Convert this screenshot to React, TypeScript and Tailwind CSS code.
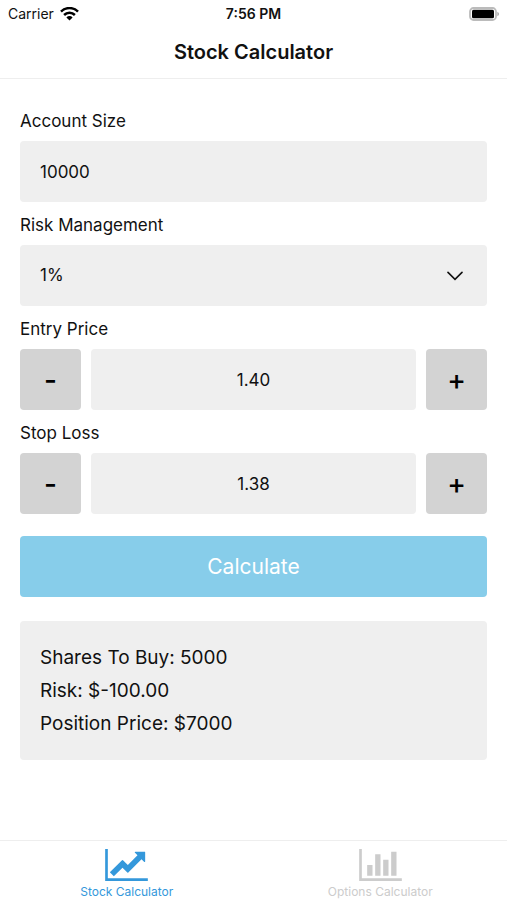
import { useState } from "react"

const fieldStyle = "h-[61px] w-full min-w-0 rounded bg-[#efefef] text-[17px] text-[#111] outline-none"
const labelStyle = "mb-2.5 block text-[17px] leading-5"

function StatusBar() {
    return (
        <div className="grid h-7 grid-cols-3 items-center px-2 text-sm text-[#111]">
            <div className="flex items-center gap-1.5">
                <span>Carrier</span>
                <svg width="19" height="14" viewBox="0 0 19 14" aria-hidden="true">
                    <g fill="none" stroke="#000" strokeWidth="2.5">
                        <path d="M1 4.6a12 12 0 0 1 17 0" />
                        <path d="M4.1 8a7.6 7.6 0 0 1 10.8 0" />
                    </g>
                    <path d="M6.4 10.4a4.4 4.4 0 0 1 6.2 0L9.5 13.5z" fill="#000" />
                </svg>
            </div>
            <span className="text-center font-semibold">7:56 PM</span>
            <svg className="justify-self-end" width="31" height="15" viewBox="0 0 31 15" aria-hidden="true">
                <rect x="2" y="1" width="26" height="12" rx="3.5" fill="#fff" stroke="#bbb" strokeWidth="1.8" />
                <rect x="4" y="2.8" width="22" height="8.4" rx="1.5" fill="#000" />
                <path d="M29.4 4.8q1.6.7 1.6 2.2t-1.6 2.2z" fill="#a5a5a5" />
            </svg>
        </div>
    )
}

type StepperProps = {
    id: string
    label: string
    value: string
    onChange: (value: string) => void
}

function Stepper({ id, label, value, onChange }: StepperProps) {
    const step = (amount: number) => onChange((Number(value) + amount).toFixed(2))
    const buttonStyle = "size-[61px] shrink-0 rounded bg-[#d3d3d3] text-[28px] font-medium text-black"

    return (
        <div>
            <label htmlFor={id} className={labelStyle}>{label}</label>
            <div className="flex gap-2.5">
                <button type="button" aria-label={`Decrease ${label}`} onClick={() => step(-0.01)} className={buttonStyle}>-</button>
                <input id={id} value={value} onChange={(e) => onChange(e.target.value)} className={`${fieldStyle} text-center`} type="text" inputMode="decimal" />
                <button type="button" aria-label={`Increase ${label}`} onClick={() => step(0.01)} className={buttonStyle}>+</button>
            </div>
        </div>
    )
}

function App() {
    const [account, setAccount] = useState('10000')
    const [percent, setPercent] = useState('1')
    const [entry, setEntry] = useState('1.40')
    const [stop, setStop] = useState('1.38')
    const [result, setResult] = useState({ shares: 5000, risk: '-100.00', price: 7000 })

    function calculate() {
        const risk = Number(account) * Number(percent) / 100
        const distance = Math.abs(Number(entry) - Number(stop))
        if (!distance) {
            return
        }
        const shares = Math.round(risk / distance)
        setResult({ shares, risk: (-risk).toFixed(2), price: Math.round(shares * Number(entry)) })
    }

    return (
        <div className="flex min-h-screen flex-col bg-white font-['Inter',sans-serif] text-[#111]">
            <header className="border-b border-[#eee]">
                <StatusBar />
                <h1 className="pt-2.5 pb-3 text-center text-xl leading-7 font-semibold">Stock Calculator</h1>
            </header>

            <main className="flex-1 px-5 pt-8">
                <div className="flex flex-col gap-[13px]">
                    <div>
                        <label htmlFor="account" className={labelStyle}>Account Size</label>
                        <input id="account" value={account} onChange={(e) => setAccount(e.target.value)} className={`${fieldStyle} block px-5`} type="text" inputMode="numeric" />
                    </div>
                    <div>
                        <label htmlFor="risk" className={labelStyle}>Risk Management</label>
                        <div className="relative">
                            <select id="risk" value={percent} onChange={(e) => setPercent(e.target.value)} className={`${fieldStyle} block appearance-none px-5`}>
                                <option value="1">1%</option>
                                <option value="2">2%</option>
                                <option value="3">3%</option>
                            </select>
                            <svg className="pointer-events-none absolute inset-y-0 right-6 my-auto" width="16" height="10" viewBox="0 0 16 10" aria-hidden="true">
                                <path d="M1 1.4l7 7 7-7" fill="none" stroke="#111" strokeWidth="1.6" strokeLinecap="round" />
                            </svg>
                        </div>
                    </div>
                    <Stepper id="entry" label="Entry Price" value={entry} onChange={setEntry} />
                    <Stepper id="stop" label="Stop Loss" value={stop} onChange={setStop} />
                </div>

                <button type="button" onClick={calculate} className="mt-[22px] block h-[61px] w-full rounded bg-[#87cdea] text-[21px] text-white">
                    Calculate
                </button>

                <div className="mt-6 rounded bg-[#efefef] p-5 text-[19px] leading-[33px]">
                    <p>Shares To Buy: {result.shares}</p>
                    <p>Risk: ${result.risk}</p>
                    <p>Position Price: ${result.price}</p>
                </div>
            </main>

            <nav className="grid h-[60px] grid-cols-2 border-t border-[#eee] text-xs leading-4">
                <a href="#stock" aria-current="page" className="flex flex-col items-center gap-[3px] pt-2 text-[#3498db]">
                    <svg width="43" height="32" viewBox="0 128 2048 1536" fill="currentColor" aria-hidden="true">
                        <path d="M2048 1536v128H0V128h128v1408h1920zM1920 288v435q0 21-19.5 29.5T1865 745l-121-121-633 633q-10 10-23 10t-23-10L832 1024l-416 416-192-192 585-585q10-10 23-10t23 10l233 233 464-464-121-121q-16-16-7.5-35.5T1453 256h435q14 0 23 9t9 23z" />
                    </svg>
                    Stock Calculator
                </a>
                <a href="#options" className="flex flex-col items-center gap-[3px] pt-2 text-[#ccc]">
                    <svg width="43" height="32" viewBox="0 128 2048 1536" fill="currentColor" aria-hidden="true">
                        <path d="M640 896v512H384V896h256zm384-512v1024H768V384h256zm1024 1152v128H0V128h128v1408h1920zM1408 640v768h-256V640h256zm384-384v1152h-256V256h256z" />
                    </svg>
                    Options Calculator
                </a>
            </nav>
        </div>
    )
}

export default App
